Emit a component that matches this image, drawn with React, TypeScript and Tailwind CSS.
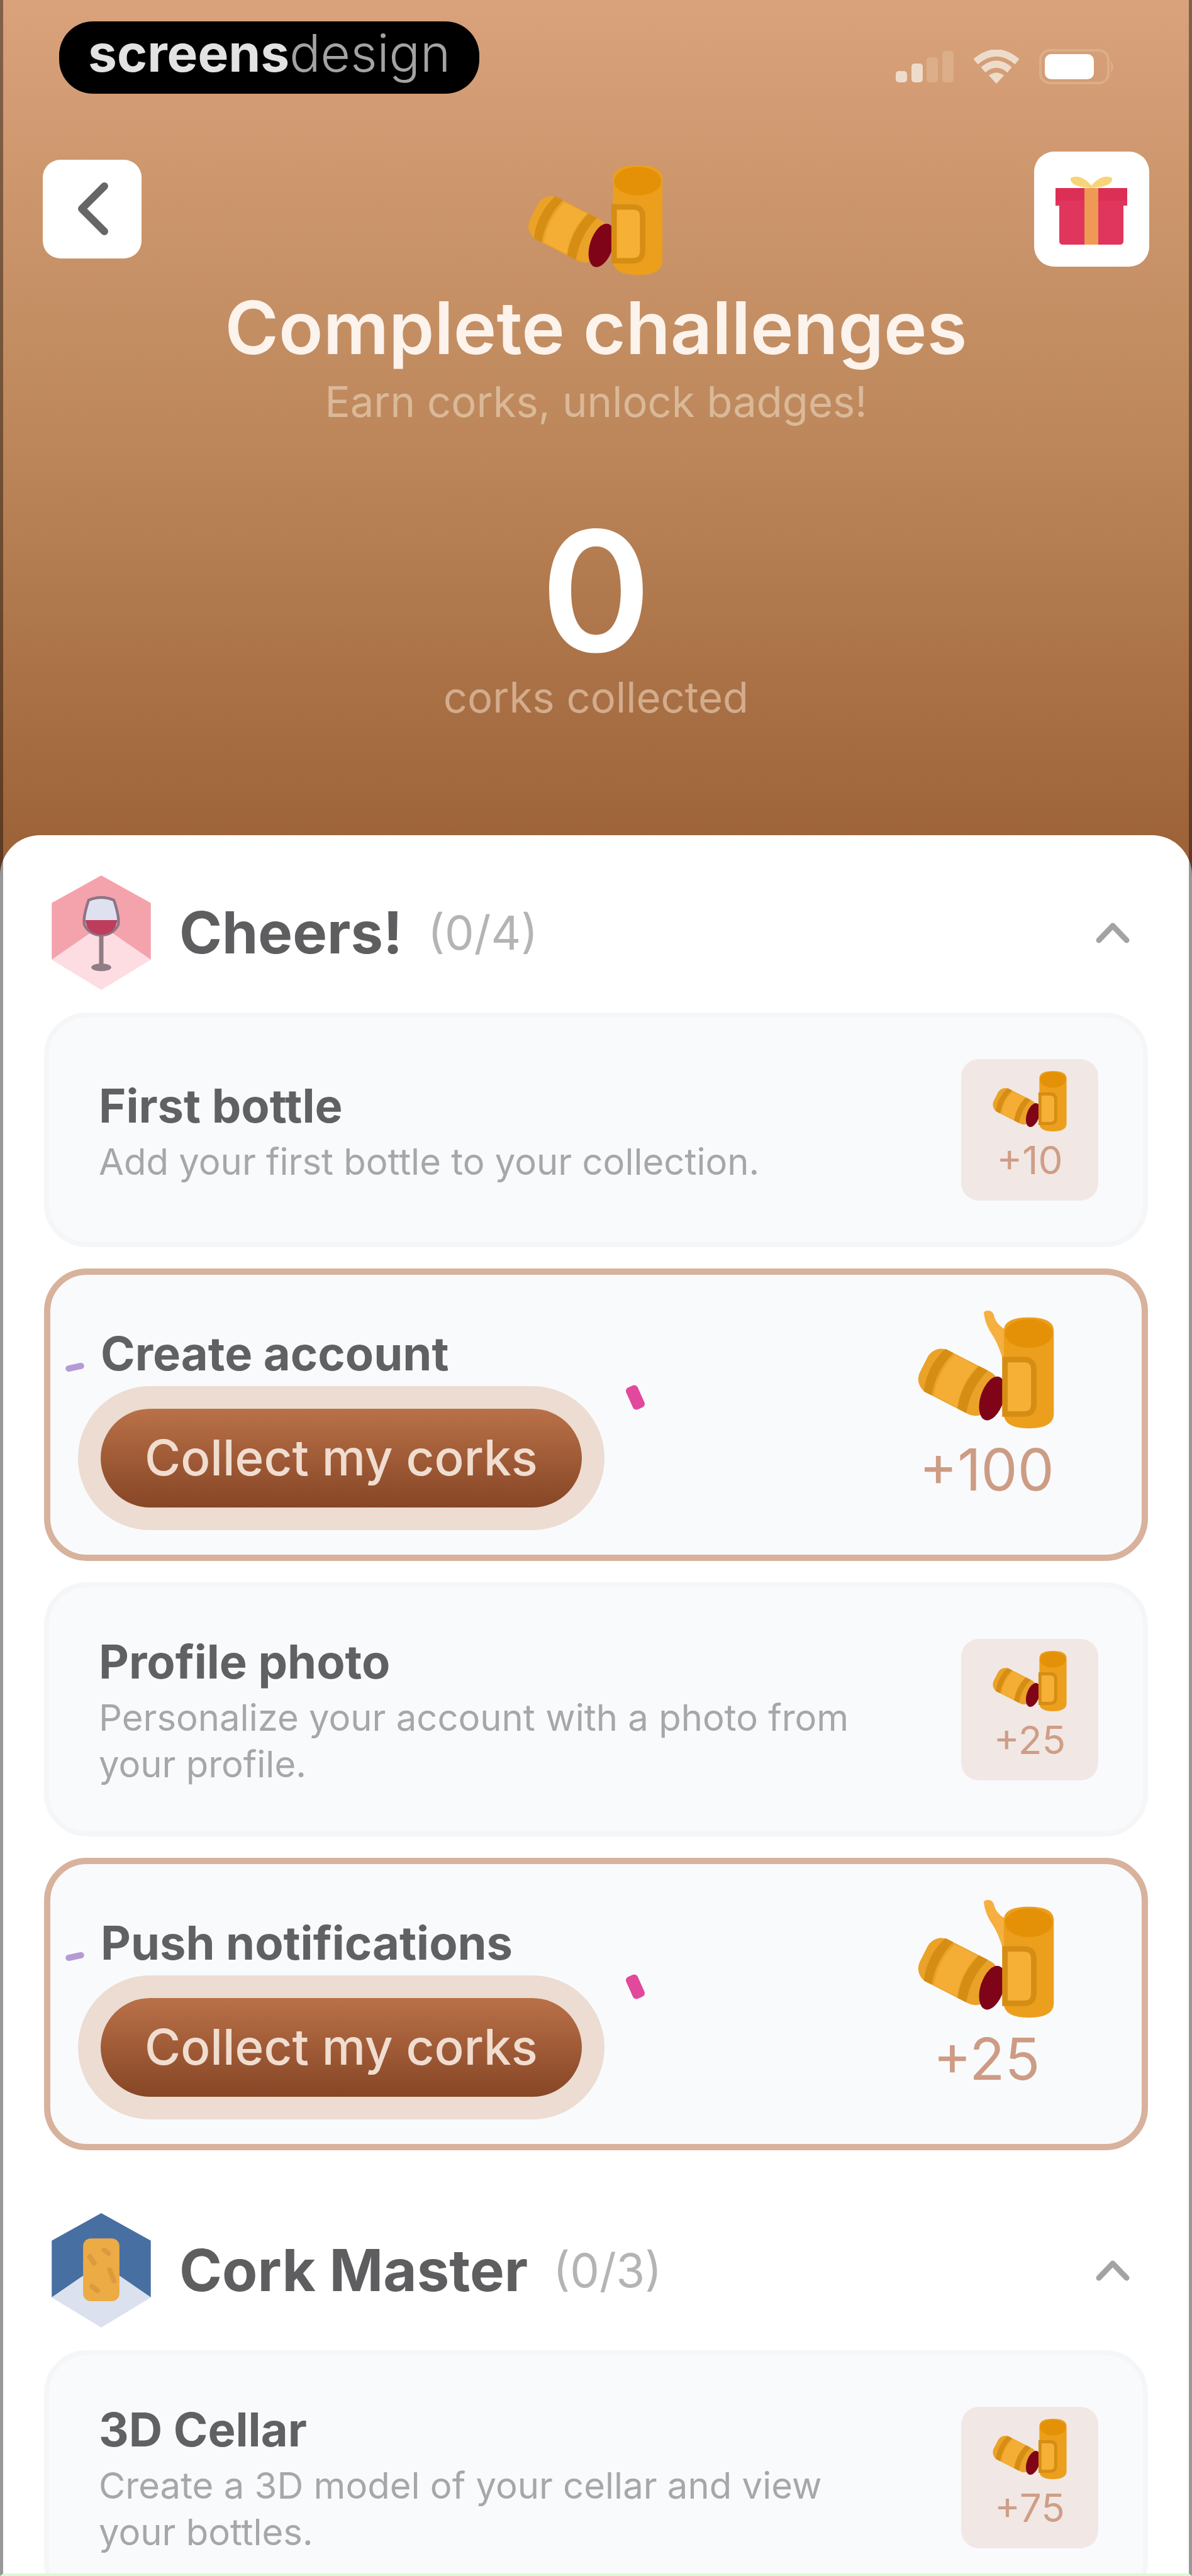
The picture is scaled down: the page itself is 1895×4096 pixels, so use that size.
import { ReactNode } from "react";

type Challenge = {
  title: string;
  description?: string;
  reward: number;
  collectable?: boolean;
};

const CHEERS: Challenge[] = [
  {
    title: "First bottle",
    description: "Add your first bottle to your collection.",
    reward: 10,
  },
  { title: "Create account", reward: 100, collectable: true },
  {
    title: "Profile photo",
    description: "Personalize your account with a photo from your profile.",
    reward: 25,
  },
  { title: "Push notifications", reward: 25, collectable: true },
];

const CORK_MASTER: Challenge[] = [
  {
    title: "3D Cellar",
    description: "Create a 3D model of your cellar and view your bottles.",
    reward: 75,
  },
];

const Corks: React.FC<{ className: string; stick?: boolean }> = ({
  className,
  stick,
}) => (
  <svg
    className={className}
    viewBox="58 28 248 204"
    overflow="visible"
    aria-hidden="true"
  >
    {stick && (
      <path
        d="M180 22q8-4 12 4 4 20 26 30v66q-8-38-22-60-14-20-16-40z"
        fill="#f5b040"
        stroke="#f5b040"
        strokeWidth="6"
        strokeLinejoin="round"
      />
    )}
    <g transform="rotate(27 136 146)">
      <rect x="62" y="106" width="140" height="86" rx="28" fill="#eba229" />
      <path d="M84 106h16q-14 42 0 86h-16q-16-44 0-86z" fill="#d68d14" />
      <path d="M104 108h46q-14 40 0 82h-46q-14-40 0-82z" fill="#f5ae35" />
      <path d="M152 106h18q-14 42 0 86h-18q-14-44 0-86z" fill="#d68d14" />
    </g>
    <ellipse
      cx="192"
      cy="176"
      rx="21"
      ry="41"
      transform="rotate(18 192 176)"
      fill="#800418"
    />
    <path d="M213 54q0-24 45-24t45 24v150q0 26-45 26t-45-26z" fill="#eb9f1c" />
    <ellipse cx="258" cy="59" rx="43" ry="26" fill="#e49107" />
    <path
      d="M215 106h34q18 0 18 18v62q0 18-18 18h-34z"
      fill="#f6b036"
      stroke="#d68d14"
      strokeWidth="10"
    />
  </svg>
);

const GlassBadge = () => (
  <svg
    className="h-[182px] w-[158px] shrink-0"
    viewBox="33 17 180 208"
    aria-hidden="true"
  >
    <path d="M123 17l90 50v103l-90-62-90 62V67z" fill="#f4a3ad" />
    <path d="M123 108l90 62-90 55-90-55z" fill="#fddce2" />
    <path
      d="M100 62q23-10 46 0 10 30 8 44-8 18-31 20-23-2-31-20-2-14 8-44z"
      fill="#dfe1f0"
      stroke="#8b7685"
      strokeWidth="5"
    />
    <path d="M94 98h58q-3 25-29 27-26-2-29-27z" fill="#be3d5c" />
    <path d="M123 126v54" stroke="#8f7c84" strokeWidth="8" />
    <ellipse cx="123" cy="184" rx="18" ry="7" fill="#8f7c84" />
  </svg>
);

const CorkBadge = () => (
  <svg
    className="h-[182px] w-[158px] shrink-0"
    viewBox="33 17 180 208"
    aria-hidden="true"
  >
    <path d="M123 17l90 50v103l-90-62-90 62V67z" fill="#486fa2" />
    <path d="M123 108l90 62-90 55-90-55z" fill="#dbe1ee" />
    <rect x="90" y="63" width="66" height="114" rx="14" fill="#ecab45" />
    <path
      d="M102 96l8 12M138 120l8 20M106 150l10 8M128 84l8 6"
      stroke="#dc9a3e"
      strokeWidth="9"
      strokeLinecap="round"
    />
  </svg>
);

const StatusIcons = () => (
  <div className="mt-[29px] flex items-center gap-[30px]">
    <svg className="h-[50px] w-[92px]" viewBox="0 0 92 50" aria-hidden="true">
      <rect x="0" y="32" width="18" height="18" rx="5" fill="#eedccb" />
      <rect x="25" y="20" width="18" height="30" rx="5" fill="#eedccb" />
      <rect x="49" y="10" width="18" height="40" rx="5" fill="#dcae8a" />
      <rect x="74" y="0" width="18" height="50" rx="5" fill="#dcae8a" />
    </svg>
    <svg className="h-[54px] w-[76px]" viewBox="0 0 76 54" aria-hidden="true">
      <path
        d="M5 19q33-28 66 0M17 32q21-18 42 0"
        fill="none"
        stroke="#eedccb"
        strokeWidth="11"
      />
      <path d="M26 41q12-9 24 0L38 54z" fill="#eedccb" />
    </svg>
    <svg
      className="h-[56px] w-[122px]"
      viewBox="0 0 122 56"
      aria-hidden="true"
    >
      <rect
        x="2"
        y="2"
        width="108"
        height="52"
        rx="15"
        fill="none"
        stroke="#dcae8a"
        strokeWidth="4"
      />
      <path d="M114 19q8 9 0 18z" fill="#dcae8a" />
      <rect x="9" y="8" width="78" height="40" rx="10" fill="#fff" />
    </svg>
  </div>
);

const Header = () => (
  <header className="flex flex-col pb-[179px] pt-[34px] text-center text-white">
    <div className="flex items-center justify-between pl-[94px] pr-[121px]">
      <div className="flex h-[115px] items-center rounded-[54px] bg-black px-[46px] pb-[14px] text-[82px] leading-[80px]">
        <span className="font-bold text-[#e2e2e2]">screens</span>
        <span className="font-light text-[#a3a3a3]">design</span>
      </div>
      <StatusIcons />
    </div>

    <div className="mt-[76px] grid grid-cols-3 items-center px-[68px]">
      <button
        type="button"
        aria-label="Back"
        className="flex size-[157px] items-center justify-center rounded-[28px] bg-white"
      >
        <svg
          className="h-[88px] w-[54px]"
          viewBox="0 0 54 88"
          fill="none"
          stroke="#666"
          strokeWidth="12"
          strokeLinecap="round"
          strokeLinejoin="round"
        >
          <path d="M46 8L10 44l36 36" />
        </svg>
      </button>
      <Corks className="mt-9 h-[178px] w-[217px] justify-self-center" />
      <button
        type="button"
        aria-label="Rewards"
        className="flex size-[183px] items-center justify-center justify-self-end rounded-[32px] bg-white"
      >
        <svg className="size-[114px]" viewBox="0 0 114 114">
          <path d="M0 24h114v28h-6v56q0 6-6 6H12q-6 0-6-6V52H0z" fill="#e0355c" />
          <path d="M0 24h114v20H0z" fill="#dc2f55" />
          <path d="M46 24h22v90H46z" fill="#ee9a55" />
          <path
            d="M57 24Q22 22 24 8q16-8 33 12Q74 0 90 8q2 14-33 16z"
            fill="#f7d47a"
          />
        </svg>
      </button>
    </div>

    <h1 className="mt-[22px] text-[116px] font-semibold leading-[120px] text-[#fbf3ec]">
      Complete challenges
    </h1>
    <p className="mt-[18px] text-[67px] leading-[80px] text-[#dab998]">
      Earn corks, unlock badges!
    </p>
    <p className="mt-[130px] text-[266px] font-semibold leading-[260px]">0</p>
    <p className="text-[67px] leading-[80px] text-[#d3ac8c]">corks collected</p>
  </header>
);

const ChallengeCard: React.FC<{ challenge: Challenge }> = ({ challenge }) => (
  <li className="flex items-center justify-between gap-[140px] rounded-[68px] border-8 border-[#f5f6f8] bg-[#f9fafc] py-[66px] pl-[79px] pr-[71px]">
    <div className="pb-1 pt-3">
      <h3 className="text-[74px] font-bold leading-[80px] text-[#606163]">
        {challenge.title}
      </h3>
      <p className="mt-[12px] text-[58px] leading-[74px] text-[#a6a7a9]">
        {challenge.description}
      </p>
    </div>
    <div className="flex h-[225px] w-[218px] shrink-0 flex-col items-center rounded-[28px] bg-[#f1e8e5] pt-[18px]">
      <Corks className="h-[98px] w-[119px]" />
      <span className="mt-[8px] text-[62px] leading-[74px] text-[#cf9e86]">
        +{challenge.reward}
      </span>
    </div>
  </li>
);

const CollectCard: React.FC<{ challenge: Challenge }> = ({ challenge }) => (
  <li className="relative flex min-h-[465px] items-center justify-between rounded-[68px] border-[10px] border-[#d8b29c] bg-[#f9fafc] pl-[80px] pr-[137px]">
    <span className="absolute left-[24px] top-[142px] h-[10px] w-[30px] -rotate-12 rounded-full bg-[#b49ad6]" />
    <span className="absolute left-[920px] top-[176px] h-[38px] w-[20px] -rotate-24 rounded-[6px] bg-[#e2489c]" />
    <div className="pt-[9px]">
      <h3 className="text-[74px] font-bold leading-[80px] text-[#606163]">
        {challenge.title}
      </h3>
      <button
        type="button"
        className="mt-[48px] h-[157px] rounded-full bg-linear-to-b from-[#b97148] to-[#874626] px-[70px] text-[78px] font-medium leading-[80px] text-[#f0ddd0] shadow-[0_0_0_36px_#ecdcd2]"
      >
        Collect my corks
      </button>
    </div>
    <div className="flex w-[219px] flex-col items-center pb-[19px]">
      <Corks className="h-[180px] w-[219px]" stick />
      <span className="mt-[14px] text-[92px] leading-[100px] text-[#cd9c84]">
        +{challenge.reward}
      </span>
    </div>
  </li>
);

const Section: React.FC<{
  title: string;
  total: number;
  badge: ReactNode;
  challenges: Challenge[];
}> = ({ title, total, badge, challenges }) => (
  <section>
    <button
      type="button"
      className="flex w-full items-center pl-3 pr-[29px] text-left"
    >
      {badge}
      <h2 className="ml-[45px] text-[92px] font-bold leading-[100px] text-[#5e5e60]">
        {title}
      </h2>
      <span className="ml-[40px] text-[74px] leading-[100px] text-[#b4b4b6]">
        (0/{total})
      </span>
      <svg
        className="ml-auto h-[34px] w-[54px]"
        viewBox="0 0 54 34"
        fill="none"
        stroke="#a3a3a5"
        strokeWidth="9"
        strokeLinecap="round"
        strokeLinejoin="round"
        aria-hidden="true"
      >
        <path d="M5 29L27 6l22 23" />
      </svg>
    </button>
    <ul className="mt-9 flex flex-col gap-[34px]">
      {challenges.map((challenge) =>
        challenge.collectable ? (
          <CollectCard key={challenge.title} challenge={challenge} />
        ) : (
          <ChallengeCard key={challenge.title} challenge={challenge} />
        )
      )}
    </ul>
  </section>
);

const App = () => {
  return (
    <div className="relative h-screen overflow-hidden bg-white font-['Inter','Open_Sans',sans-serif]">
      <div className="bg-linear-to-b from-[#d9a27b] via-[#bd875b] to-[#9b6036]">
        <Header />
        {/* rounded top edge of the sheet, drawn over the gradient */}
        <div className="h-[64px] rounded-t-[64px] bg-white" />
      </div>
      <main className="flex flex-col gap-[100px] px-[70px]">
        <Section
          title="Cheers!"
          total={4}
          badge={<GlassBadge />}
          challenges={CHEERS}
        />
        <Section
          title="Cork Master"
          total={3}
          badge={<CorkBadge />}
          challenges={CORK_MASTER}
        />
      </main>
      <div className="pointer-events-none absolute inset-0 border-x-[5px] border-b-4 border-x-black/40 border-b-[#dcf8d4]" />
    </div>
  );
};

export default App;
